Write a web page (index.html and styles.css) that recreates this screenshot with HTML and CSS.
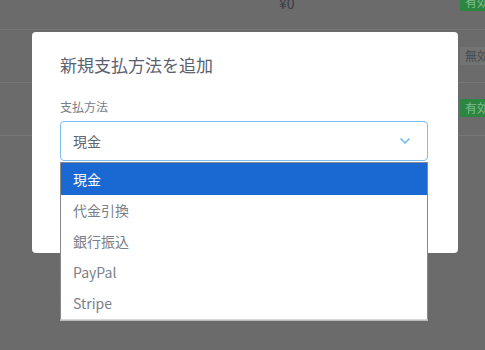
FILE: index.html
```html
<!DOCTYPE html>
<html lang="ja">
<head>
    <meta charset="UTF-8">
    <meta name="viewport" content="width=device-width, initial-scale=1.0">
    <title>支払方法</title>
    <link rel="stylesheet" href="styles.css">
</head>
<body>

    <div class="page">
        <div class="row row-first">
            <span class="amount">¥0</span>
            <span class="badge badge-on">有効</span>
        </div>
        <div class="row">
            <span class="badge badge-off">無効</span>
        </div>
        <div class="row">
            <span class="badge badge-on">有効</span>
        </div>
    </div>

    <div class="modal">
        <h2 class="modal-title">新規支払方法を追加</h2>
        <label class="field-label">支払方法</label>
        <div class="select">
            <span>現金</span>
            <svg class="chevron" width="12" height="8" viewBox="0 0 12 8">
                <path d="M1.5 1.5 L6 6 L10.5 1.5" fill="none" stroke="#6fb6f2" stroke-width="1.5"/>
            </svg>
            <!-- native-style options popup -->
            <ul class="options">
                <li class="selected">現金</li>
                <li>代金引換</li>
                <li>銀行振込</li>
                <li>PayPal</li>
                <li>Stripe</li>
            </ul>
        </div>
    </div>

</body>
</html>
```

FILE: styles.css
```css
body {
    margin: 0;
    background: #6b6b6b;
    font-family: "Noto Sans CJK JP", "Noto Sans", sans-serif;
    overflow: hidden;
    height: 350px;
    position: relative;
}
.page {
    margin-top: -23px;
}
.row {
    height: 52px;
    border-bottom: 1px solid #767676;
    position: relative;
}
.amount {
    position: absolute;
    left: 279px;
    top: 16px;
    font-size: 14px;
    color: #3c3c44;
}
.badge {
    position: absolute;
    left: 460px;
    padding: 0 5px;
    height: 18px;
    line-height: 18px;
    font-size: 12px;
    border-radius: 2px;
    white-space: nowrap;
}
.badge-on {
    background: #2b8641;
    color: #80bd8f;
}
.badge-off {
    background: #737373;
    color: #4a4a4a;
}
.row-first .badge {
    top: 16px;
}
.row:nth-child(2) .badge {
    top: 17px;
}
.row:nth-child(3) .badge {
    top: 16px;
}
.modal {
    position: absolute;
    left: 32px;
    top: 32px;
    width: 426px;
    height: 221px;
    background: #fff;
    border-radius: 4px;
    box-sizing: border-box;
    padding: 22px 30px 0 28px;
}
.modal-title {
    margin: 0;
    font-size: 17px;
    font-weight: normal;
    line-height: 22px;
    color: #5a616e;
}
.field-label {
    display: block;
    margin-top: 23px;
    font-size: 12px;
    line-height: 16px;
    color: #777c85;
}
.select {
    position: relative;
    margin-top: 6px;
    height: 40px;
    box-sizing: border-box;
    border: 1px solid #7cbdf3;
    border-radius: 4px;
    display: flex;
    align-items: center;
    padding: 0 12px;
    font-size: 14px;
    color: #60656e;
}
.chevron {
    margin-left: auto;
    margin-right: 4px;
}
.options {
    position: absolute;
    left: -1px;
    right: -1px;
    top: 40px;
    margin: 0;
    padding: 0;
    list-style: none;
    background: #fff;
    border: 1px solid #8a8a8a;
    border-bottom-color: #d8d8d8;
    box-shadow: 0 1px 0 #bcbcbc;
}
.options li {
    height: 31px;
    line-height: 31px;
    padding: 0 12px;
    font-size: 14px;
    color: #7a7f8a;
}
.options li.selected {
    height: 32px;
    line-height: 32px;
    background: #1a68d2;
    color: #fff;
}
```
